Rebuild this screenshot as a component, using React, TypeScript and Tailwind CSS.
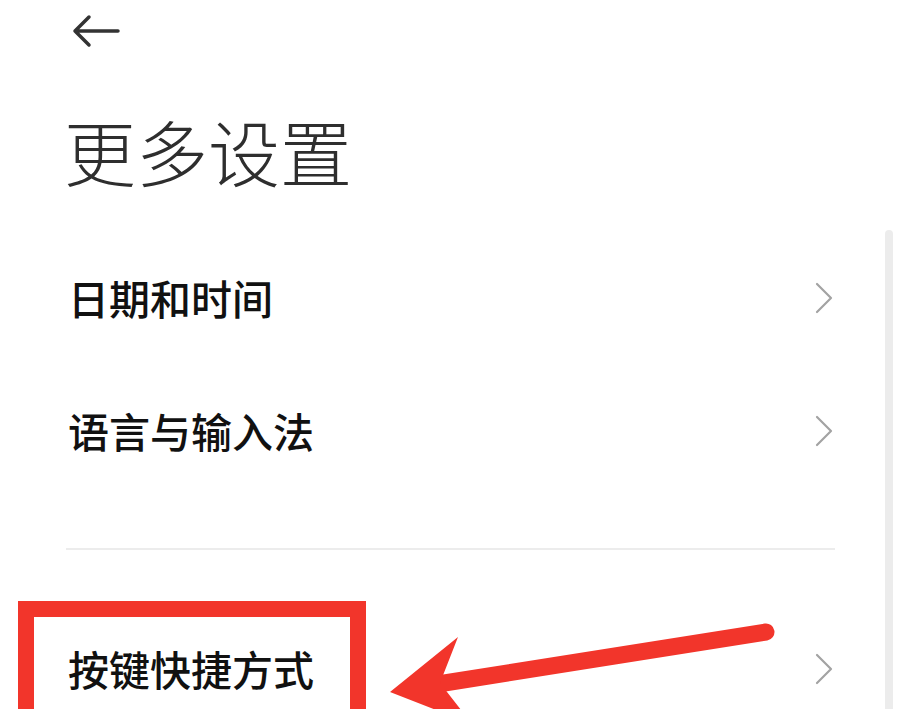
import React from 'react';

const Chevron: React.FC = () => (
  <svg width="20" height="32" viewBox="0 0 20 32" fill="none">
    <polyline points="3,2 17,16 3,30" stroke="#a3a3a3" strokeWidth="2.2" strokeLinecap="round" strokeLinejoin="round" />
  </svg>
);

const Row: React.FC<{ label: string }> = ({ label }) => (
  <div className="h-[133px] flex items-center justify-between pl-[68px] pr-[66px]">
    <span className="text-[41px] leading-none font-medium text-[#111]">{label}</span>
    <Chevron />
  </div>
);

const App: React.FC = () => {
  return (
    <div
      className="relative w-[900px] h-[709px] overflow-hidden bg-white"
      style={{ fontFamily: '"Noto Sans CJK SC", "Noto Sans", sans-serif' }}
    >
      {/* back button */}
      <div className="h-[62px] flex items-center pl-[71px]">
        <svg width="50" height="36" viewBox="0 0 50 36" fill="none">
          <path d="M47 18H4M18 4L4 18l14 14" stroke="#333" strokeWidth="3.5" strokeLinecap="round" strokeLinejoin="round" />
        </svg>
      </div>

      <h1 className="mt-[52px] pl-[64px] text-[72px] leading-none font-light text-[#2e2e2e]">更多设置</h1>

      <div className="mt-[45px]">
        <Row label="日期和时间" />
        <Row label="语言与输入法" />
      </div>

      <div className="mt-[51px] ml-[66px] mr-[65px] h-[2px] bg-[#ececec]" />

      <div className="mt-[52px]">
        <Row label="按键快捷方式" />
      </div>

      {/* scrollbar */}
      <div className="absolute left-[885px] top-[230px] w-[8px] h-[520px] rounded-full bg-[#ececec]" />

      {/* red annotation box */}
      <div className="absolute left-[18px] top-[601px] w-[348px] h-[140px] border-[16px] border-[#f2352b]" />

      {/* red annotation arrow */}
      <svg className="absolute left-0 top-0" width="900" height="709" viewBox="0 0 900 709" fill="none">
        <line x1="438" y1="684" x2="766" y2="632" stroke="#f2352b" strokeWidth="17" strokeLinecap="round" />
        <polygon points="390,692 458,637 440,683 472,724" fill="#f2352b" />
      </svg>
    </div>
  );
};

export default App;
